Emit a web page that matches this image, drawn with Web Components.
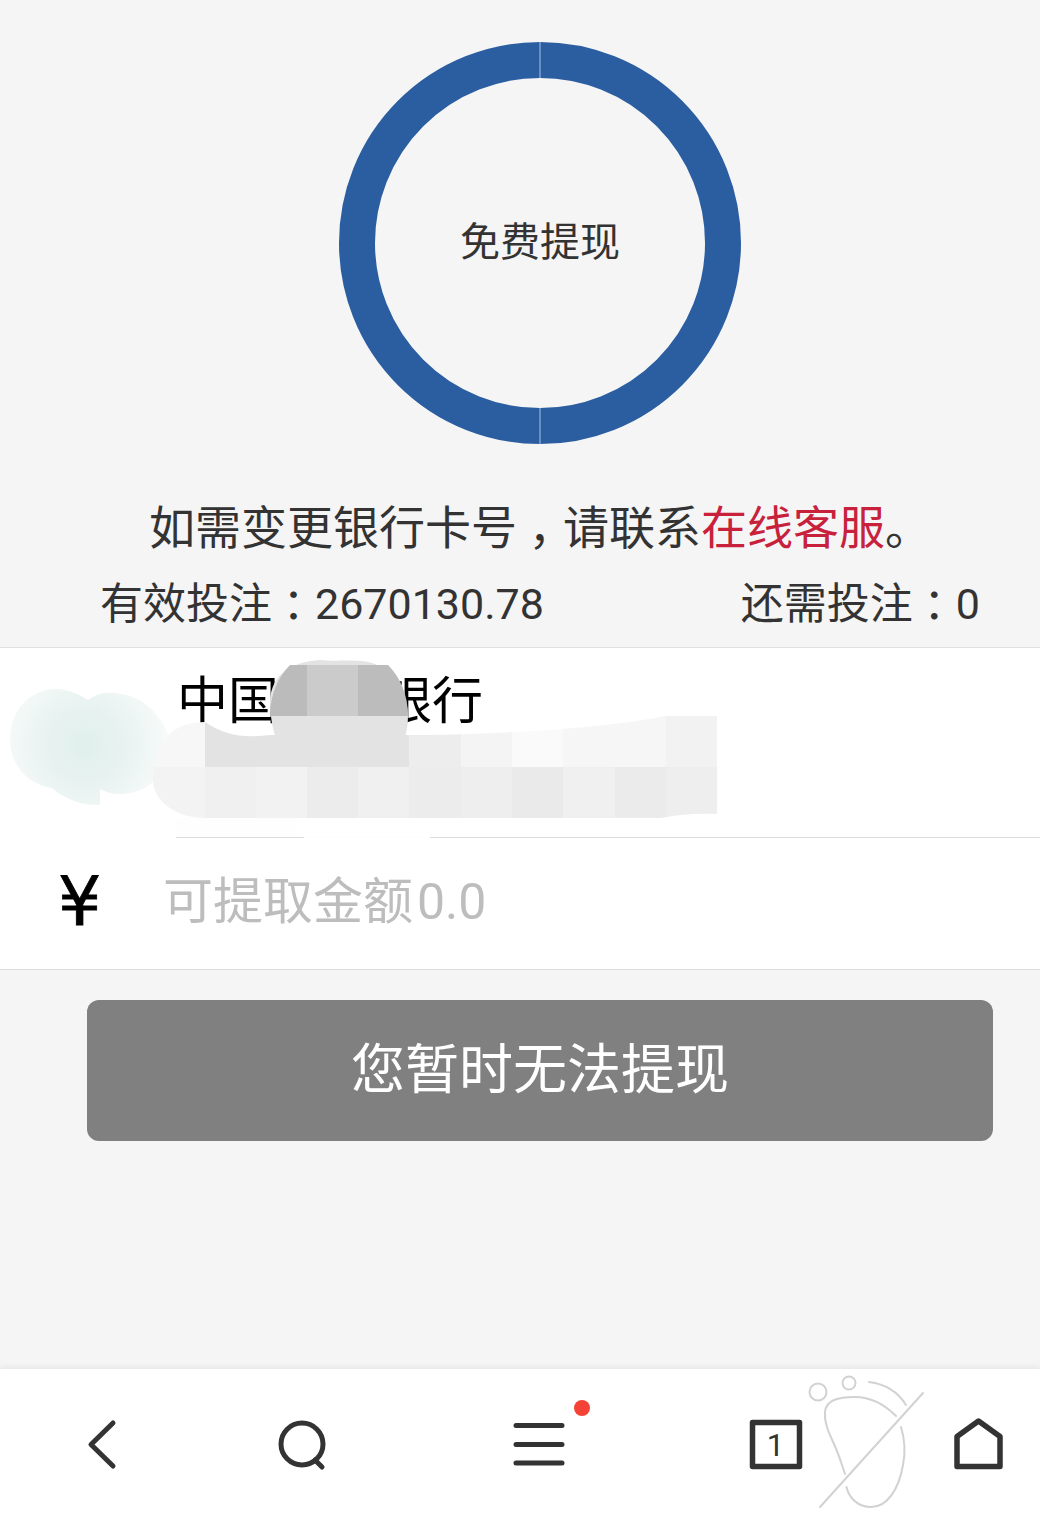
<!DOCTYPE html>
<html lang="zh-CN">
<head>
<meta charset="utf-8">
<title>提现</title>
<style>
html,body{margin:0;padding:0;background:#f5f5f5}
body{font-family:Roboto,"Noto Sans CJK SC",sans-serif;color:#333}
</style>
</head>
<body>
<wd-page>
  <wd-ring>免费提现</wd-ring>
  <wd-notice>如需变更银行卡号<wd-punct>，</wd-punct>请联系<span>在线客服</span>。</wd-notice>
  <wd-stats>
    <span>有效投注<wd-punct>：</wd-punct>2670130.78</span>
    <span>还需投注<wd-punct>：</wd-punct>0</span>
  </wd-stats>
  <wd-bank>中国　　银行</wd-bank>
  <wd-amount></wd-amount>
  <wd-button>您暂时无法提现</wd-button>
  <wd-toolbar></wd-toolbar>
</wd-page>
<script>
function def(name, html){
  customElements.define(name, class extends HTMLElement{
    constructor(){super();this.attachShadow({mode:'open'}).innerHTML=html;}
  });
}
def('wd-page',`<style>:host{display:flex;flex-direction:column;height:1518px;overflow:hidden;position:relative}</style><slot></slot>`);
def('wd-punct',`<style>:host{display:inline-block;width:1em;text-align:center;font-feature-settings:"halt";line-height:1}</style><slot></slot>`);
def('wd-ring',`<style>
:host{display:flex;justify-content:center;padding:42px 0 0 40px}
.r{width:402px;height:402px;position:relative;display:flex;align-items:center;justify-content:center;font-size:40px;line-height:48px;color:#333}
svg{position:absolute;inset:0}
span{position:relative}
</style><div class="r"><svg width="402" height="402" viewBox="0 0 402 402"><circle cx="201" cy="201" r="183" fill="none" stroke="#2b5da1" stroke-width="36"/><path d="M201 0V36M201 366V402" stroke="#a9c3e6" stroke-width="1"/></svg><span><slot></slot></span></div>`);
def('wd-notice',`<style>
:host{display:block;margin-top:54px;padding-left:40px;height:60px;line-height:60px;font-size:46px;text-align:center;color:#333;white-space:nowrap}
::slotted(span){color:#c8213c}
</style><slot></slot>`);
def('wd-stats',`<style>
:host{display:flex;justify-content:space-between;margin-top:16px;margin-bottom:13px;height:60px;line-height:60px;font-size:43px;padding:0 60px 0 100px;color:#333;white-space:nowrap}
</style><slot></slot>`);
def('wd-bank',`<style>
:host{display:block;position:relative;background:#fff;border-top:1px solid #e0e0e0;border-bottom:1px solid #dcdcdc;height:189px;box-sizing:content-box;color:#000;font-size:51px;line-height:60px;padding-left:177px;white-space:pre}
.t{display:block;padding-top:24px}
svg{position:absolute;left:0;top:0}
</style><span class="t"><slot></slot></span>
<svg width="740" height="191" viewBox="0 648 740 191">
<defs>
<radialGradient id="g" gradientUnits="userSpaceOnUse" cx="85" cy="745" r="80"><stop offset="0" stop-color="#e0efeb"/><stop offset=".55" stop-color="#e9f3f1"/><stop offset="1" stop-color="#f6faf9"/></radialGradient>
<clipPath id="c"><path d="M205 722C225 736 245 738 270 735L408 735C470 735 600 730 665 716H717V814C700 813 680 814 660 818H205C175 818 153 800 153 780C153 745 170 722 205 722Z"/></clipPath>
</defs>
<path d="M10 740C10 705 35 688 58 689C70 690 80 695 88 700C96 694 105 692 115 693C148 695 170 725 170 748C170 775 145 794 120 794C112 794 106 792 100 789V805C85 806 65 800 52 788C28 785 10 765 10 740Z" fill="url(#g)"/>
<rect x="175" y="818" width="120" height="19" fill="#fefefe"/>
<g clip-path="url(#c)">
<rect x="153" y="716" width="52" height="51" fill="#f7f7f7"/>
<rect x="153" y="767" width="52" height="51" fill="#f3f3f3"/>
<rect x="205" y="716" width="204" height="51" fill="#e3e3e3"/>
<rect x="409" y="716" width="52" height="51" fill="#ededed"/>
<rect x="461" y="716" width="51" height="51" fill="#f4f4f4"/>
<rect x="512" y="716" width="51" height="51" fill="#fafafa"/>
<rect x="563" y="716" width="103" height="51" fill="#f6f6f6"/>
<rect x="666" y="716" width="51" height="51" fill="#f2f2f2"/>
<rect x="205" y="767" width="51" height="51" fill="#f0f0f0"/>
<rect x="256" y="767" width="51" height="51" fill="#f2f2f2"/>
<rect x="307" y="767" width="51" height="51" fill="#ececec"/>
<rect x="358" y="767" width="51" height="51" fill="#f0f0f0"/>
<rect x="409" y="767" width="52" height="51" fill="#ececec"/>
<rect x="461" y="767" width="51" height="51" fill="#eeeeee"/>
<rect x="512" y="767" width="51" height="51" fill="#eaeaea"/>
<rect x="563" y="767" width="52" height="51" fill="#f0f0f0"/>
<rect x="615" y="767" width="51" height="51" fill="#ebebeb"/>
<rect x="666" y="767" width="51" height="51" fill="#eeeeee"/>
</g>
<path d="M270 700C272 675 290 662 320 660C340 662 360 658 375 664C395 672 408 695 408 716C408 735 402 745 396 752H285C275 745 270 720 270 700Z" fill="#e3e3e3"/>
<path d="M270 716C270 695 278 677 290 665H307V716Z" fill="#bbbbbb"/>
<rect x="307" y="665" width="51" height="51" fill="#cbcbcb"/>
<path d="M358 665H388C400 677 408 695 408 716H358Z" fill="#bcbcbc"/>
<rect x="0" y="836" width="176" height="3" fill="#fff"/>
<rect x="304" y="836" width="126" height="3" fill="#fefefe"/>
</svg>`);
def('wd-amount',`<style>
:host{display:flex;align-items:center;background:#fff;border-bottom:1px solid #dcdcdc;height:131px;white-space:nowrap}
b{font:400 68px/68px "DejaVu Sans",sans-serif;-webkit-text-stroke:.8px #000;color:#000;width:163px;padding-left:58px;padding-bottom:4px;box-sizing:border-box}
span{font-size:50px;line-height:50px;color:#bdbdbd;padding-bottom:4px}
i{font-style:normal;padding-left:4px}
</style><b>¥</b><span>可提取金额<i>0.0</i></span>`);
def('wd-button',`<style>
:host{display:flex;align-items:center;justify-content:center;box-sizing:border-box;margin:30px 47px 0 87px;height:141px;border-radius:12px;background:#808080;color:#fff;font-size:54px;line-height:54px;white-space:nowrap}
</style><slot></slot>`);
def('wd-toolbar',`<style>
:host{display:block;position:relative;margin-top:auto;height:149px;background:#fff;box-shadow:0 -3px 6px rgba(0,0,0,.05)}
svg{position:absolute;left:0;top:0;overflow:visible}
text{font-family:Roboto,sans-serif;font-size:31px;fill:#333}
</style>
<svg width="1040" height="149" viewBox="0 1369 1040 149" fill="none" stroke="#333" stroke-linecap="round" stroke-linejoin="round">
<path d="M113 1423L91 1444.5L113 1466" stroke-width="5"/>
<circle cx="302" cy="1444" r="21" stroke-width="5"/>
<path d="M315 1460L322 1467" stroke-width="5"/>
<path d="M516 1425.500H562M516 1444.500H562M516 1463H562" stroke-width="5"/>
<circle cx="582" cy="1408" r="8" fill="#f44336" stroke="none"/>
<rect x="752.500" y="1422.500" width="47" height="44" stroke-width="5.500"/>
<text x="775.500" y="1456" text-anchor="middle" stroke="none">1</text>
<g stroke="#d2d2d2" stroke-width="2">
<circle cx="818" cy="1392" r="8.500"/>
<circle cx="849" cy="1383" r="6.500"/>
<path d="M869 1382C885 1384 898 1392 906 1405"/>
<path d="M923 1393L820 1507"/>
<path d="M896 1416C882 1402 868 1397 855 1397C838 1397 826 1400 825 1412C824 1424 830 1435 834 1444C839 1455 842 1465 845 1474"/>
<path d="M901 1427C905 1440 905 1455 903 1465C899 1488 888 1507 871 1507C858 1507 849 1498 846.500 1487"/>
</g>
<path d="M957 1436.500L978.500 1421L1000 1436.500V1466.500H957Z" stroke-width="5.500"/>
</svg>`);
</script>
</body>
</html>
